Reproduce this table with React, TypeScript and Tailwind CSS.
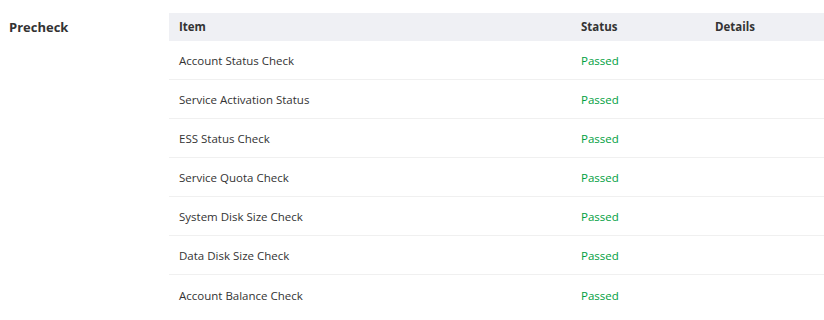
const checks = [
  'Account Status Check',
  'Service Activation Status',
  'ESS Status Check',
  'Service Quota Check',
  'System Disk Size Check',
  'Data Disk Size Check',
  'Account Balance Check',
];

export default function App() {
  return (
    <div className="flex h-[320px] w-[824px] bg-white font-['Open_Sans',sans-serif] text-[#333]">
      <div className="w-[169px] shrink-0 pl-[9px] pt-[17px] text-[13px] font-bold leading-[20px]">
        Precheck
      </div>
      <div className="flex-1 pt-[13px] text-[11.5px]">
        <div className="flex h-[28px] items-center bg-[#eff0f4] font-bold">
          <div className="w-[402px] px-[10px]">Item</div>
          <div className="w-[134px] px-[10px]">Status</div>
          <div className="flex-1 px-[10px]">Details</div>
        </div>
        {checks.map(name => (
          <div key={name} className="flex h-[39px] items-center border-b border-[#f0f0f0] pt-[2px] last:border-b-0">
            <div className="w-[402px] px-[10px]">{name}</div>
            <div className="w-[134px] px-[10px] text-[#00a040]">Passed</div>
            <div className="flex-1 px-[10px]"></div>
          </div>
        ))}
      </div>
    </div>
  );
}
